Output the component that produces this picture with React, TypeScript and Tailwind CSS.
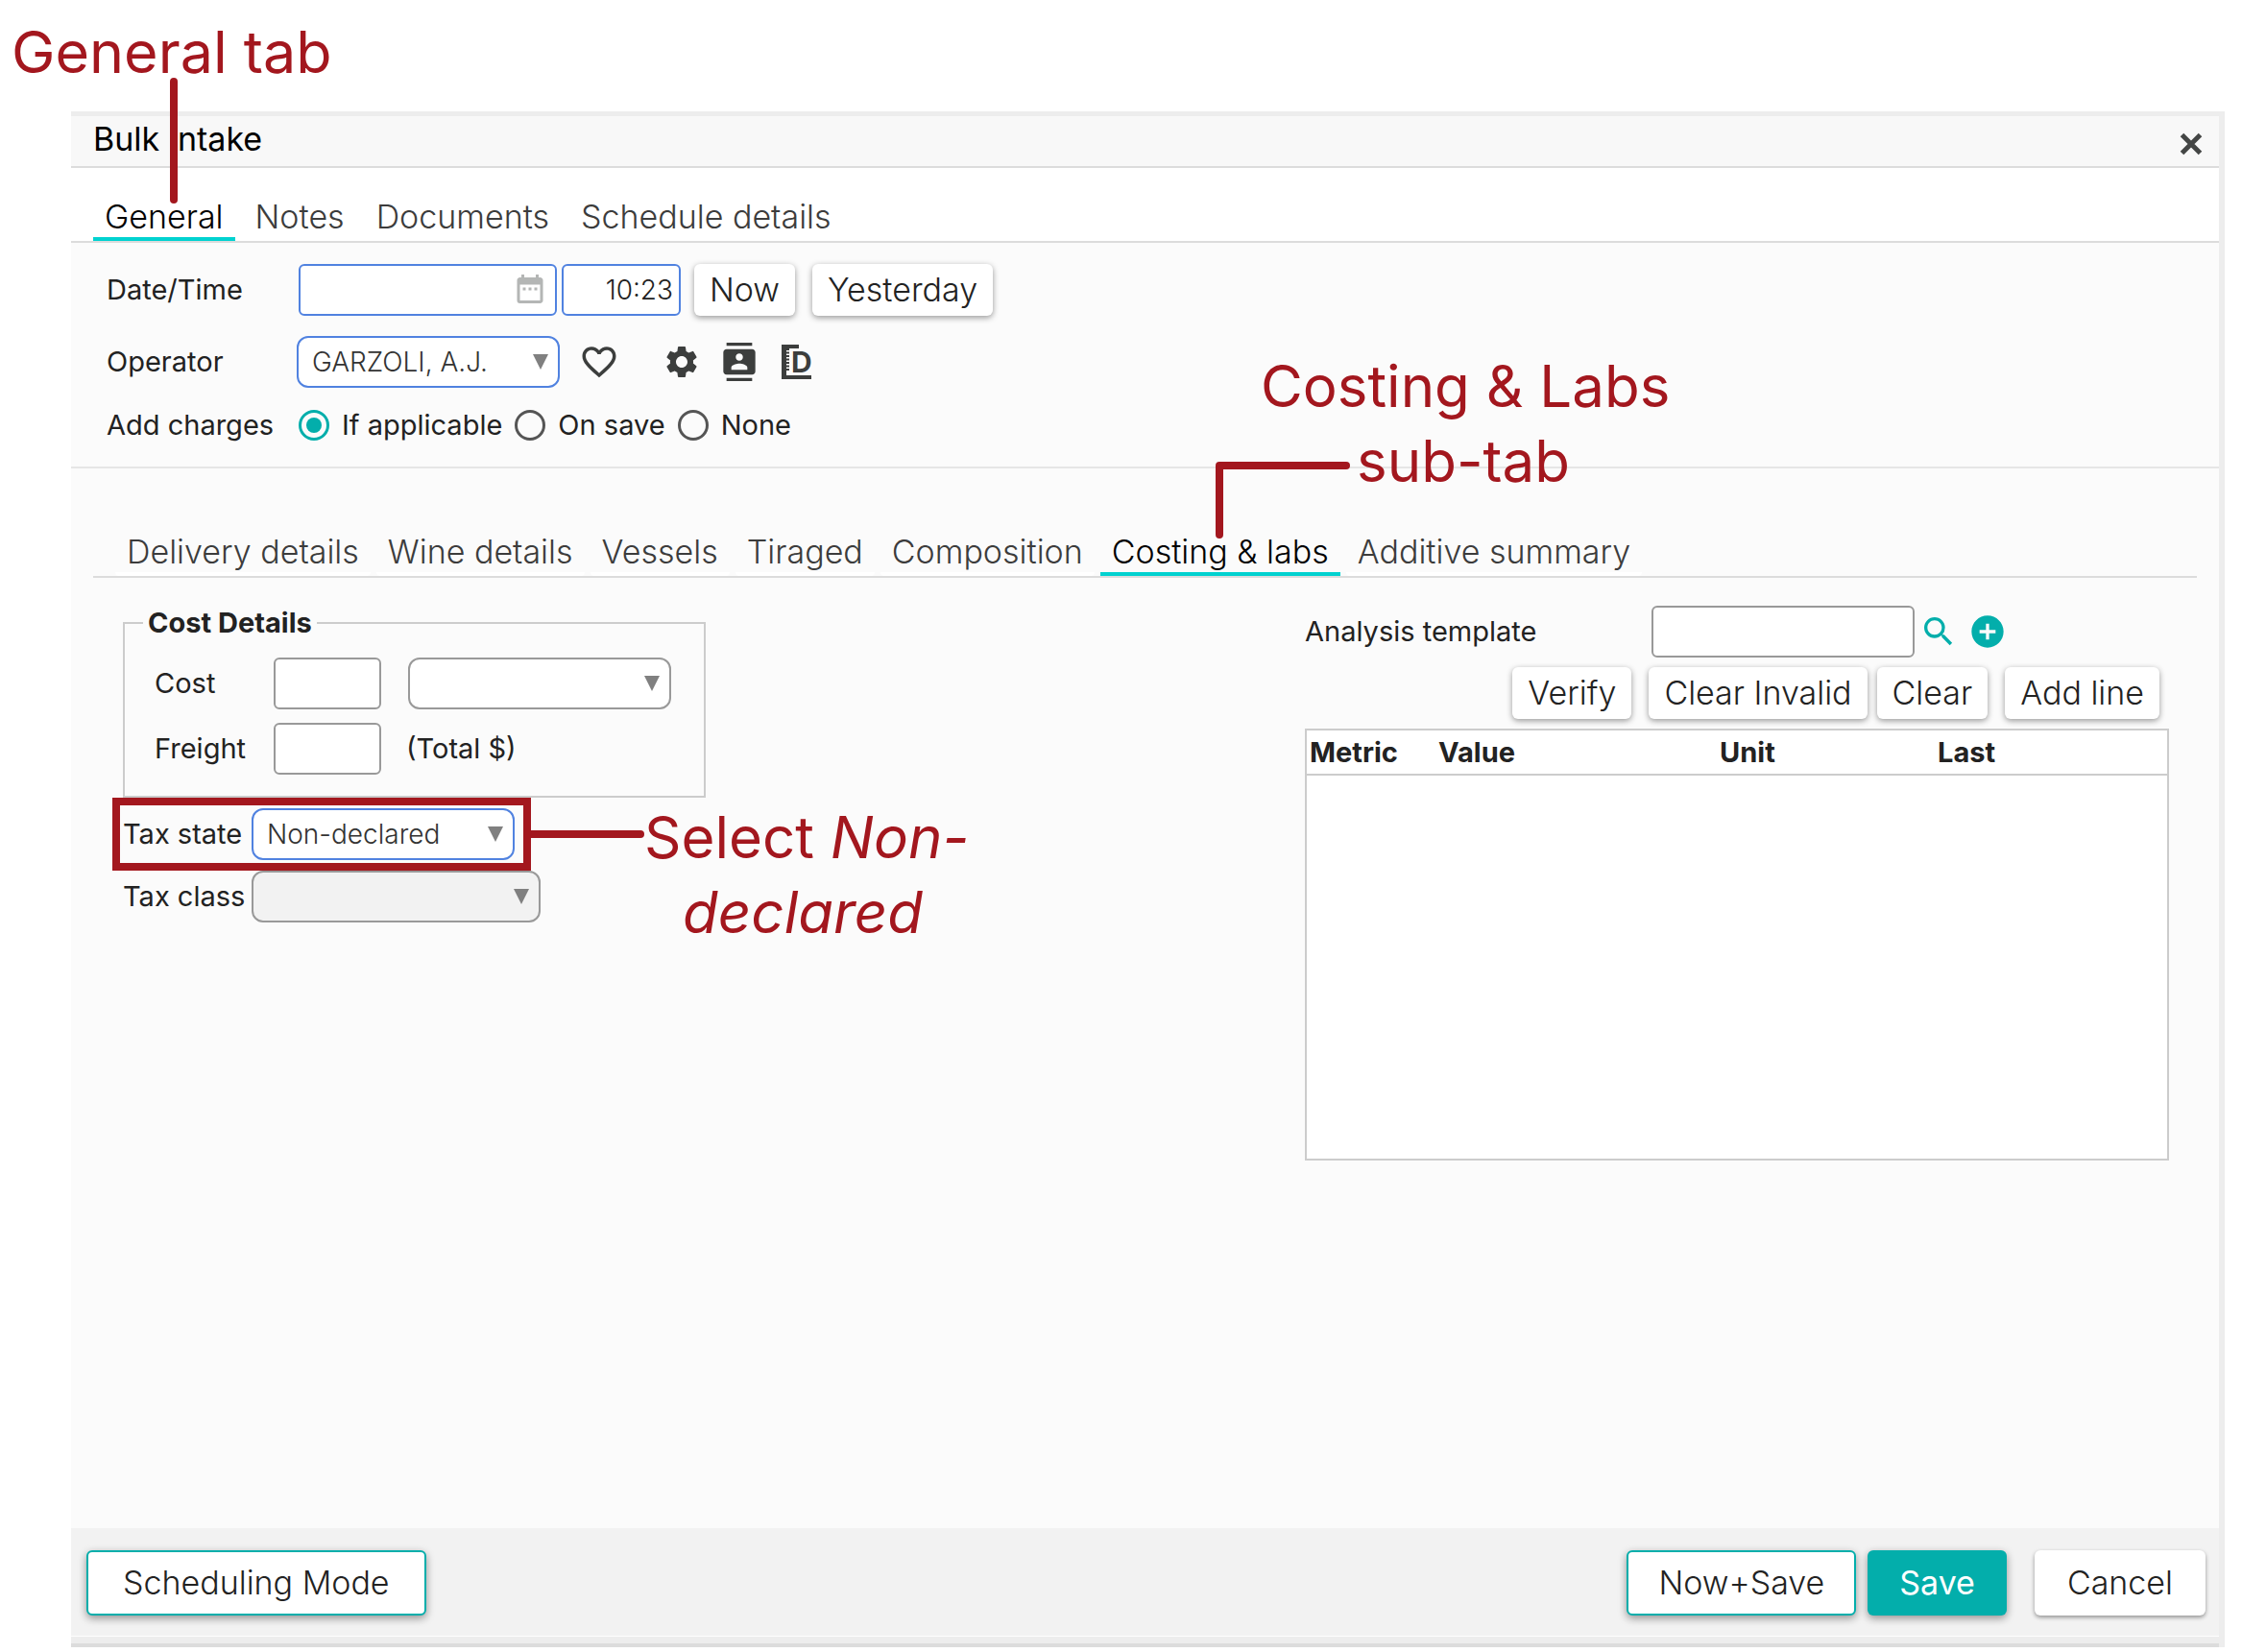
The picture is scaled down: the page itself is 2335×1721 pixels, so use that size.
import { useState } from "react";
import type { ReactNode, SelectHTMLAttributes } from "react";
import clsx from "clsx";
import {
  MdAddCircle,
  MdContacts,
  MdDateRange,
  MdFavoriteBorder,
  MdSearch,
  MdSettings,
} from "react-icons/md";

const mainTabs = ["General", "Notes", "Documents", "Schedule details"];

const subTabs = [
  "Delivery details",
  "Wine details",
  "Vessels",
  "Tiraged",
  "Composition",
  "Costing & labs",
  "Additive summary",
];

const chargeOptions = ["If applicable", "On save", "None"];

function Tabs({
  items,
  active,
  onChange,
  className,
}: {
  items: string[];
  active: string;
  onChange: (tab: string) => void;
  className?: string;
}) {
  return (
    <div
      role="tablist"
      className={clsx(
        "flex border-b-2 border-[#dcdcdc] text-[34px] font-light leading-10",
        className
      )}
    >
      {items.map((tab) => (
        <button
          key={tab}
          type="button"
          role="tab"
          aria-selected={tab === active}
          onClick={() => onChange(tab)}
          className={clsx(
            "border-b-4 px-3 pb-px whitespace-nowrap",
            tab === active
              ? "border-[#00d2d0] text-black"
              : "rounded-b-sm border-white text-[#3c3c3c]"
          )}
        >
          {tab}
        </button>
      ))}
    </div>
  );
}

function ActionButton({ children }: { children: ReactNode }) {
  return (
    <button
      type="button"
      className="h-[54px] rounded-md bg-white px-4 text-[34px] font-light whitespace-nowrap text-[#222] shadow-[0_2px_6px_rgba(0,0,0,0.4)]"
    >
      {children}
    </button>
  );
}

function Select({
  className,
  children,
  ...props
}: SelectHTMLAttributes<HTMLSelectElement>) {
  return (
    <div className={clsx("relative", className)}>
      <select
        {...props}
        className="h-[54px] w-full appearance-none rounded-xl border-2 border-[#999] bg-white pl-[14px] text-[28px] font-light text-[#333] disabled:bg-[#f2f2f2] disabled:opacity-100 data-[filled=true]:border-[#5082e0]"
      >
        {children}
      </select>
      <svg
        viewBox="0 0 16 16"
        className="pointer-events-none absolute top-[19px] right-3 size-4 fill-[#808080]"
      >
        <path d="M0 0h16L8 16z" />
      </svg>
    </div>
  );
}

function RulerIcon() {
  return (
    <svg viewBox="-3 0 37 38" className="h-[38px] w-[37px] fill-[#3c3e3d]">
      <path d="M1 1h18v4H9v2h-3v1.500h3v2h-3v1.500h3v2h-3v1.500h3v2h-3v1.500h3v2h-3v1.500h3v2h-3v1.500h3v2h-3v5h26v4H1z" />
      <text
        x="11"
        y="30"
        fontSize="30"
        fontWeight="700"
        fontFamily="Inter, sans-serif"
      >
        D
      </text>
    </svg>
  );
}

export default function App() {
  const [mainTab, setMainTab] = useState("General");
  const [subTab, setSubTab] = useState("Costing & labs");
  const [charges, setCharges] = useState("If applicable");

  return (
    <div className="flex min-h-screen flex-col bg-white pt-[116px] pr-[18px] pb-[5px] pl-[74px] font-[Inter,sans-serif] text-[29px] leading-9 text-[#222]">
      <div className="relative flex flex-1 flex-col border-t-[5px] border-r-[6px] border-[#ededed] bg-[#fbfbfb]">
        <header className="flex h-[54px] items-center justify-between border-b-2 border-[#dcdcdc] bg-[#f8f8f8] pr-[17px] pl-[23px]">
          <h1 className="pb-1 text-[34px] leading-10 text-black">Bulk Intake</h1>
          <button type="button" aria-label="Close" className="pt-[6px]">
            <svg
              viewBox="0 0 24 24"
              className="size-6 stroke-[#444645] stroke-5"
            >
              <path d="M2.500 2.500l19 19M21.500 2.500l-19 19" />
            </svg>
          </button>
        </header>

        <Tabs
          items={mainTabs}
          active={mainTab}
          onChange={setMainTab}
          className="gap-[9px] bg-white pt-[31px] pl-[23px]"
        />

        <section className="flex flex-col gap-[21px] border-b-2 border-[#e6e6e6] pt-[22px] pb-[25px] pl-[37px]">
          <div className="flex items-center">
            <label htmlFor="date" className="w-[200px]">
              Date/Time
            </label>
            <div className="relative">
              <input
                id="date"
                type="text"
                className="h-[54px] w-[269px] rounded-md border-2 border-[#5082e0] bg-white px-3 font-light"
              />
              <MdDateRange className="pointer-events-none absolute top-2 right-[10px] size-9 fill-[#b4b6b5]" />
            </div>
            <input
              type="text"
              aria-label="Time"
              defaultValue="10:23"
              className="ml-[5px] h-[54px] w-[124px] rounded-md border-2 border-[#5082e0] bg-white pr-[6px] text-right text-[28px] font-light"
            />
            <div className="ml-[14px] flex gap-[18px]">
              <ActionButton>Now</ActionButton>
              <ActionButton>Yesterday</ActionButton>
            </div>
          </div>

          <div className="flex items-center">
            <label htmlFor="operator" className="w-[198px]">
              Operator
            </label>
            <Select id="operator" data-filled="true" className="w-[274px]">
              <option>GARZOLI, A.J.</option>
            </Select>
            <button type="button" aria-label="Favourite" className="ml-5">
              <MdFavoriteBorder className="size-[42px] fill-[#3c3e3d]" />
            </button>
            <div className="ml-[45px] flex items-center gap-5">
              <button type="button" aria-label="Settings">
                <MdSettings className="size-10 fill-[#3c3e3d]" />
              </button>
              <button type="button" aria-label="Contacts">
                <MdContacts className="size-10 fill-[#3c3e3d]" />
              </button>
              <button type="button" aria-label="Dip chart">
                <RulerIcon />
              </button>
            </div>
          </div>

          <div
            role="radiogroup"
            aria-labelledby="charges-label"
            className="flex items-center"
          >
            <span id="charges-label" className="w-[200px]">
              Add charges
            </span>
            <div className="flex gap-[13px]">
              {chargeOptions.map((option) => (
                <label key={option} className="flex items-center gap-[13px]">
                  <input
                    type="radio"
                    name="charges"
                    checked={charges === option}
                    onChange={() => setCharges(option)}
                    className="size-8 appearance-none rounded-full border-3 border-[#555] bg-clip-content p-[5px] checked:border-[#03aeab] checked:bg-[#03aeab]"
                  />
                  {option}
                </label>
              ))}
            </div>
          </div>
        </section>

        <main className="flex-1 px-[23px] pt-[67px]">
          <Tabs
            items={subTabs}
            active={subTab}
            onChange={setSubTab}
            className="gap-[6px] pl-[23px]"
          />

          <div className="flex items-start justify-between pr-[29px] pl-[31px]">
            <div className="pt-[29px]">
              <fieldset className="w-[607px] border-2 border-[#ccc] pb-[22px] pl-[31px]">
                <legend className="-ml-3 px-[5px] font-bold">Cost Details</legend>
                <div className="flex items-center pt-[18px]">
                  <label htmlFor="cost" className="w-[124px]">
                    Cost
                  </label>
                  <input
                    id="cost"
                    type="text"
                    className="h-[54px] w-[112px] rounded-md border-2 border-[#999] bg-white px-2 font-light"
                  />
                  <Select aria-label="Cost unit" className="ml-7 w-[274px]">
                    <option></option>
                  </Select>
                </div>
                <div className="flex items-center pt-[14px]">
                  <label htmlFor="freight" className="w-[124px]">
                    Freight
                  </label>
                  <input
                    id="freight"
                    type="text"
                    className="h-[54px] w-[112px] rounded-md border-2 border-[#999] bg-white px-2 font-light"
                  />
                  <span className="ml-[26px]">(Total $)</span>
                </div>
              </fieldset>

              <div className="relative flex w-[425px] items-center py-[11px]">
                <label htmlFor="tax-state" className="w-[134px]">
                  Tax state
                </label>
                <Select id="tax-state" data-filled="true" className="w-[274px]">
                  <option>Non-declared</option>
                </Select>
                <div className="pointer-events-none absolute inset-y-0 right-0 -left-[11px] border-8 border-[#a3171e]" />
                <div className="absolute top-[34px] left-full h-2 w-[118px] rounded-r-full bg-[#a3171e]" />
                <p className="absolute top-0 left-full ml-[118px] w-[330px] pt-[2px] text-center text-[60px] leading-[78px] whitespace-nowrap text-[#a3171e]">
                  Select <em>Non-</em>
                  <br />
                  <em>declared</em>
                </p>
              </div>

              <div className="flex items-center">
                <label htmlFor="tax-class" className="w-[134px]">
                  Tax class
                </label>
                <Select id="tax-class" disabled className="w-[301px]">
                  <option></option>
                </Select>
              </div>
            </div>

            <div className="w-[900px] pt-[29px]">
              <div className="flex items-center">
                <label htmlFor="template" className="w-[361px]">
                  Analysis template
                </label>
                <input
                  id="template"
                  type="text"
                  className="h-[54px] w-[274px] rounded-md border-2 border-[#999] bg-white px-3 font-light"
                />
                <button type="button" aria-label="Search" className="ml-[5px]">
                  <MdSearch className="size-10 fill-[#03aeab]" />
                </button>
                <button type="button" aria-label="Add template" className="ml-[11px]">
                  <MdAddCircle className="size-10 fill-[#03aeab]" />
                </button>
              </div>
              <div className="flex justify-end gap-[18px] pt-[10px] pr-[10px]">
                <ActionButton>Verify</ActionButton>
                <div className="flex gap-[10px]">
                  <ActionButton>Clear Invalid</ActionButton>
                  <ActionButton>Clear</ActionButton>
                </div>
                <ActionButton>Add line</ActionButton>
              </div>
              <div className="mt-[10px] min-h-[450px] border-2 border-[#ccc] bg-white">
                <table className="w-full table-fixed text-left">
                  <thead>
                    <tr className="h-[46px] border-b-2 border-[#ccc]">
                      <th className="w-[134px] pl-[3px]">Metric</th>
                      <th className="w-[293px] pl-[3px]">Value</th>
                      <th className="w-[227px] pl-[3px]">Unit</th>
                      <th className="pl-[3px]">Last</th>
                    </tr>
                  </thead>
                  <tbody></tbody>
                </table>
              </div>
            </div>
          </div>
        </main>

        <footer className="flex h-[113px] items-start border-b border-white bg-[#f2f2f2] pt-[23px] pr-[14px] pl-4 text-[34px] font-light">
          <button
            type="button"
            className="h-[68px] rounded-md border-2 border-[#03aeab] bg-white px-9 shadow-[0_3px_8px_rgba(0,0,0,0.4)]"
          >
            Scheduling Mode
          </button>
          <div className="ml-auto flex">
            <button
              type="button"
              className="h-[68px] rounded-md border-2 border-[#03aeab] bg-white px-[31px] shadow-[0_3px_8px_rgba(0,0,0,0.4)]"
            >
              Now+Save
            </button>
            <button
              type="button"
              className="ml-3 h-[68px] rounded-md bg-[#03aeab] px-[33px] font-normal text-white shadow-[0_3px_8px_rgba(0,0,0,0.4)]"
            >
              Save
            </button>
            <button
              type="button"
              className="ml-[29px] h-[68px] rounded-md bg-white px-[34px] shadow-[0_2px_4px_rgba(0,0,0,0.4)]"
            >
              Cancel
            </button>
          </div>
        </footer>
        <div className="h-[11px] border-b-4 border-[#dcdcdc] bg-[#ededed]" />

        <p className="absolute -top-[106px] -left-[62px] text-[61px] leading-[78px] whitespace-nowrap text-[#a3171e]">
          General tab
        </p>
        <div className="absolute -top-[40px] left-[103px] h-[131px] w-2 rounded-full bg-[#a3171e]" />

        <p className="absolute top-[242px] left-[1239px] w-[422px] text-center text-[60px] leading-[78px] whitespace-nowrap text-[#a3171e]">
          Costing &amp; Labs
          <br />
          sub-tab
        </p>
        <svg
          viewBox="0 0 140 80"
          className="absolute top-[360px] left-[1192px] h-20 w-[140px] fill-none stroke-[#a3171e] stroke-8"
        >
          <path d="M4 76V4H136" strokeLinecap="round" strokeLinejoin="round" />
        </svg>
      </div>
    </div>
  );
}
